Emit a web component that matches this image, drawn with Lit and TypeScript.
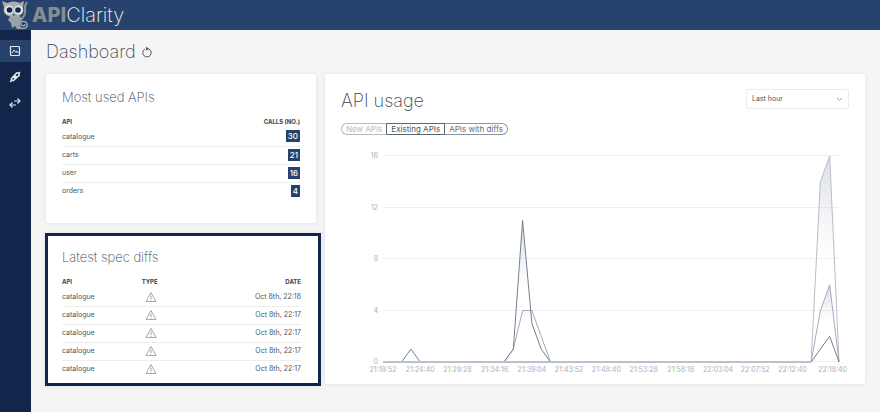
import { LitElement, html, svg, css } from "lit";
import { customElement } from "lit/decorators.js";
import { classMap } from "lit/directives/class-map.js";

const usedApis = [
  { name: "catalogue", calls: 30 },
  { name: "carts", calls: 21 },
  { name: "user", calls: 16 },
  { name: "orders", calls: 4 },
];

const diffs = ["22:18", "22:17", "22:17", "22:17", "22:17"].map((time) => ({
  name: "catalogue",
  date: `Oct 8th, ${time}`,
}));

const timeLabels = [
  "21:19:52", "21:24:40", "21:29:28", "21:34:16", "21:39:04", "21:43:52", "21:48:40",
  "21:53:28", "21:58:16", "22:03:04", "22:07:52", "22:12:40",
];

type Point = [number, number];

const series: { id: string; points: Point[] }[] = [
  { id: "fresh", points: [[0, 0], [46, 0], [47, 14], [48, 16], [49, 0]] },
  { id: "diff", points: [[0, 0], [13, 0], [14, 1], [15, 4], [16, 4], [17, 2], [18, 0], [46, 0], [47, 4], [48, 6], [49, 0]] },
  {
    id: "existing",
    points: [[0, 0], [2, 0], [3, 1], [4, 0], [13, 0], [14, 1], [15, 11], [16, 3], [17, 1], [18, 0], [46, 0], [47, 1], [48, 2], [49, 0]],
  },
];

const LEFT = 42;
const RIGHT = 498;
const TOP = 15;
const BASE = 221;
const px = (i: number) => LEFT + (i * (RIGHT - LEFT)) / 49;
const py = (v: number) => BASE - (v * (BASE - TOP)) / 16;
const toPoints = (pts: Point[]) => pts.map(([i, v]) => `${px(i).toFixed(1)},${py(v).toFixed(1)}`).join(" ");

@customElement("usage-chart")
class UsageChart extends LitElement {
  static styles = css`
    :host { display: block; }
    .chart { display: block; width: 100%; height: auto; }
    .grid { stroke: #efeff1; stroke-width: 1; }
    .label { fill: #a9b0bc; font: 7px Inter, sans-serif; }
    .line { fill: none; stroke-width: 1; stroke-linejoin: round; }
    .fresh { stroke: #b8bdca; }
    .diff { stroke: #a3acbb; }
    .existing { stroke: #74808d; }
    .base { stroke: #b9c1ca; stroke-width: 2; }
    .stop-top { stop-color: #a3abb8; stop-opacity: 0.4; }
    .stop-end { stop-color: #c9ced6; stop-opacity: 0; }
  `;

  render() {
    return html`
      <svg class="chart" viewBox="0 0 508 232" role="img" aria-label="API usage over the last hour">
        <defs>
          <linearGradient id="fade" x1="0" y1="0" x2="0" y2="1">
            <stop class="stop-top" offset="0"></stop>
            <stop class="stop-end" offset="0.5"></stop>
          </linearGradient>
        </defs>
        ${[16, 12, 8, 4, 0].map((v) => {
          const y = Math.round(py(v));
          return svg`
            <line class="grid" x1=${LEFT} x2=${RIGHT} y1=${y - 0.5} y2=${y - 0.5}></line>
            <text class="label" x="37" y=${y + 2} text-anchor="end">${v}</text>`;
        })}
        ${series.map(
          (s) => svg`
            <polygon points=${toPoints(s.points)} fill="url(#fade)"></polygon>
            <polyline class="line ${s.id}" points=${toPoints(s.points)}></polyline>`
        )}
        <line class="base" x1=${LEFT} x2=${px(46)} y1=${BASE} y2=${BASE}></line>
        ${timeLabels.map((t, i) => svg`<text class="label" x=${px(i * 4)} y="231" text-anchor="middle">${t}</text>`)}
        <text class="label" x="506" y="231" text-anchor="end">22:18:40</text>
      </svg>
    `;
  }
}

@customElement("app-root")
class AppRoot extends LitElement {
  static styles = css`
    :host {
      display: flex;
      flex-direction: column;
      min-height: 100vh;
      background: #f5f5f5;
      color: #4b5661;
      font: 7px/12px Inter, "Liberation Sans", sans-serif;
    }
    * { box-sizing: border-box; }
    .top { display: flex; align-items: center; height: 30px; padding-left: 2px; background: #27436d; }
    .mascot { width: 28px; height: 30px; }
    .brand { margin-left: 2px; font-size: 20px; line-height: 28px; font-weight: 200; color: #eef1f5; }
    .brand-api { font-weight: 800; color: #868d92; }
    .body { display: flex; flex: 1; }
    .side { display: flex; flex-direction: column; gap: 4px; width: 31px; padding-top: 10px; background: #12264b; }
    .nav { display: flex; align-items: center; justify-content: center; height: 22px; padding-right: 1px; color: #e4e8ee; }
    .nav.active { background: #27436d; }
    .nav svg { width: 12px; height: 12px; }
    .main { flex: 1; min-width: 0; padding: 10px 15px; }
    .head { display: flex; align-items: center; gap: 5px; height: 24px; margin-bottom: 10px; }
    h1, h2 { margin: 0; font-weight: 200; color: #3d4854; }
    h1 { font-size: 18px; line-height: 24px; }
    h2 { font-size: 13px; line-height: 16px; margin-bottom: 11px; }
    .refresh { display: flex; padding: 0; border: 0; background: none; color: #4b5661; }
    .refresh svg { width: 12px; height: 12px; }
    .icon { fill: none; stroke: currentColor; stroke-width: 1; }
    .columns { display: grid; grid-template-columns: 1fr 2fr; gap: 9px; align-items: start; }
    .stack { display: flex; flex-direction: column; gap: 10px; }
    .card { background: #fff; padding: 15px 16px; border-radius: 2px; box-shadow: 0 0 4px #dcdfe2; }
    .used { min-height: 149px; }
    .framed { margin: 0 -5px 0 -1px; padding: 13px 17px 5px 14px; border: 3px solid #12264b; border-radius: 0; }
    .usage { padding-bottom: 11px; }
    table { width: 100%; border-collapse: collapse; table-layout: fixed; }
    th { height: 12px; padding: 0; font-size: 6px; line-height: 12px; font-weight: 700; text-align: left; color: #38434e; }
    td { height: 18px; padding: 0; line-height: 12px; border-bottom: 1px solid #ededed; }
    tr:last-child td { border-bottom: 0; }
    .end { text-align: right; }
    .count { display: inline-block; padding: 0 2px; background: #27436d; color: #fff; font-size: 8px; font-weight: 500; }
    .warn { display: block; width: 12px; height: 12px; margin-left: 3px; color: #a0a9b5; }
    .usage-head { display: flex; justify-content: space-between; height: 22px; margin-bottom: 12px; }
    .usage-head h2 { font-size: 18px; line-height: 24px; }
    .range { position: relative; width: 103px; height: 20px; }
    .range select {
      width: 100%; height: 20px; padding: 0 5px; appearance: none; border: 1px solid #eaebed; border-radius: 2px;
      background: #fff; color: #4b5661; font: 7px/12px Inter, sans-serif;
    }
    .chevron { position: absolute; right: 6px; top: 7px; width: 7px; height: 7px; color: #9aa5b6; pointer-events: none; }
    .toggles { display: flex; margin-bottom: 6px; }
    .toggle {
      height: 12px; padding: 0 4px; border: 1px solid #8b95a3; border-left-width: 0; background: #fff; color: #65707c;
      font: 8px/10px Inter, sans-serif;
    }
    .toggle:first-child { border-left-width: 1px; border-radius: 6px 0 0 6px; }
    .toggle:last-child { border-radius: 0 6px 6px 0; }
    .toggle.muted { color: #b4bac4; border-color: #b4bac4; border-right-color: #5b6672; }
    .toggle.strong { color: #4b5661; border-color: #5b6672; }
  `;

  private mascot() {
    return html`<svg class="mascot" viewBox="0 0 28 30" aria-hidden="true">
      <path d="M17 21C22 18 24 13 23 9c-1-3 1-5 2-7" fill="none" stroke="#8c949b" stroke-width="2"></path>
      <path d="M9 15h8l3 4-2 5 1 5h-4l-2-3-3 2-1-5-3-3z" fill="#9ba2a7"></path>
      <path d="M17 27c4 3 9 1 8-3s-7-3-6 0 4 2 4 0" fill="none" stroke="#a5abae" stroke-width="1.300"></path>
      <path d="M0 1l5 2q7-3 13 0l4-2-1 6q2 8-6 9.500H8Q0 15 2 7z" fill="#a9afb1"></path>
      <circle cx="7" cy="10" r="4.500" fill="#e0e4e5"></circle>
      <circle cx="16.500" cy="10" r="4.500" fill="#e0e4e5"></circle>
      <circle cx="7.500" cy="10" r="2.800" fill="#12264b"></circle>
      <circle cx="16" cy="10" r="2.800" fill="#12264b"></circle>
      <path d="M10.500 14.500h2.500l-1.200 1.500z" fill="#12264b"></path>
    </svg>`;
  }

  private navItem(label: string, icon: unknown, active = false) {
    return html`<a href="#" class=${classMap({ nav: true, active })} aria-label=${label}>
      <svg class="icon" viewBox="0 0 12 12">${icon}</svg>
    </a>`;
  }

  render() {
    return html`
      <header class="top">
        ${this.mascot()}
        <span class="brand"><span class="brand-api">API</span>Clarity</span>
      </header>
      <div class="body">
        <nav class="side">
          ${this.navItem("Dashboard", svg`<rect x="1.500" y="1.500" width="9" height="9" rx="1" stroke-width="1.200"></rect><path d="M3 8l2-3 2 2.500L8 6l1.500 2"></path>`, true)}
          ${this.navItem("APIs", svg`<path d="M1 11l2-2M6.500 7.500l1-1M9.500 2.500L11 1" stroke-width="1.200"></path><path d="M2.500 9.500V7.500L4.500 5.500l2 2-2 2zM5.500 4.500l2-2.500h2.500v2.500l-2.500 2z" stroke-width="1.600"></path>`)}
          ${this.navItem("Traffic", svg`<path d="M5 4h5M2 8h5" stroke-width="1.200"></path><path d="M8.500 1.500L11 4 8.500 6.500M3.500 5.500L1 8l2.500 2.500" stroke-width="1.200"></path>`)}
        </nav>
        <main class="main">
          <div class="head">
            <h1>Dashboard</h1>
            <button class="refresh" aria-label="Refresh">
              <svg class="icon" viewBox="0 0 12 12"><path d="M7.500 2.800a4.200 4.200 0 1 1-3.500.2"></path><path d="M5 .8l3 1.900-3 2z" fill="currentColor" stroke="none"></path></svg>
            </button>
          </div>
          <div class="columns">
            <div class="stack">
              <section class="card used">
                <h2>Most used APIs</h2>
                <table>
                  <thead><tr><th>API</th><th class="end">CALLS (NO.)</th></tr></thead>
                  <tbody>
                    ${usedApis.map((a) => html`<tr><td>${a.name}</td><td class="end"><span class="count">${a.calls}</span></td></tr>`)}
                  </tbody>
                </table>
              </section>
              <section class="card framed">
                <h2>Latest spec diffs</h2>
                <table>
                  <thead><tr><th>API</th><th>TYPE</th><th class="end">DATE</th></tr></thead>
                  <tbody>
                    ${diffs.map(
                      (d) => html`<tr>
                        <td>${d.name}</td>
                        <td>
                          <svg class="icon warn" viewBox="0 0 12 12" role="img" aria-label="Warning">
                            <path d="M6 1.500L11 10.500H1zM6 4.500v3.500M6 8.800v1"></path>
                          </svg>
                        </td>
                        <td class="end">${d.date}</td>
                      </tr>`
                    )}
                  </tbody>
                </table>
              </section>
            </div>
            <section class="card usage">
              <div class="usage-head">
                <h2>API usage</h2>
                <div class="range">
                  <select aria-label="Time range"><option>Last hour</option></select>
                  <svg class="icon chevron" viewBox="0 0 7 7"><path d="M1 2l2.500 2.500L6 2"></path></svg>
                </div>
              </div>
              <div class="toggles">
                <button class="toggle muted">New APIs</button>
                <button class="toggle strong">Existing APIs</button>
                <button class="toggle">APIs with diffs</button>
              </div>
              <usage-chart></usage-chart>
            </section>
          </div>
        </main>
      </div>
    `;
  }
}
